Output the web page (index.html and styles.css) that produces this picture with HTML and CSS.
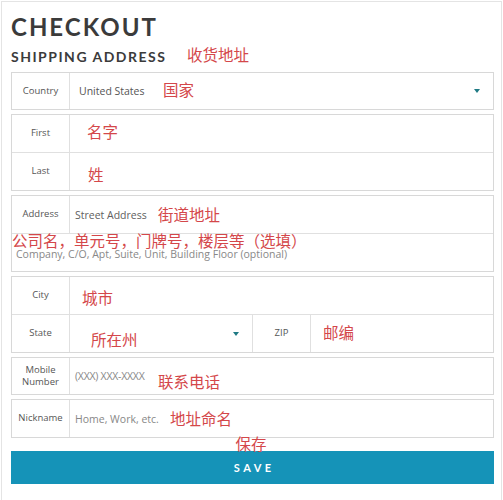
FILE: index.html
```html
<!DOCTYPE html>
<html>
<head>
<meta charset="utf-8">
<link rel="stylesheet" href="styles.css">
</head>
<body>
<div class="page">
  <h1 class="title">CHECKOUT</h1>
  <div class="subtitle-row">
    <h2 class="subtitle">SHIPPING ADDRESS</h2>
    <span class="note note-shipping">收货地址</span>
  </div>

  <div class="group">
    <div class="row row-short">
      <div class="label">Country</div>
      <div class="value value-select">United States<span class="arrow"></span></div>
      <span class="note note-country">国家</span>
    </div>
  </div>

  <div class="group">
    <div class="row">
      <div class="label">First</div>
      <div class="value"></div>
      <span class="note note-first">名字</span>
    </div>
    <div class="row">
      <div class="label">Last</div>
      <div class="value"></div>
      <span class="note note-last">姓</span>
    </div>
  </div>

  <div class="group">
    <div class="row">
      <div class="label">Address</div>
      <div class="value">Street Address</div>
      <span class="note note-street">街道地址</span>
    </div>
    <div class="row row-full">
      <div class="value value-full placeholder">Company, C/O, Apt, Suite, Unit, Building Floor (optional)</div>
      <span class="note note-company">公司名，单元号，门牌号，楼层等（选填）</span>
    </div>
  </div>

  <div class="group">
    <div class="row">
      <div class="label">City</div>
      <div class="value"></div>
      <span class="note note-city">城市</span>
    </div>
    <div class="row row-state">
      <div class="label">State</div>
      <div class="value value-state"><span class="arrow"></span></div>
      <div class="label">ZIP</div>
      <div class="value"></div>
      <span class="note note-state">所在州</span>
      <span class="note note-zip">邮编</span>
    </div>
  </div>

  <div class="group">
    <div class="row row-short">
      <div class="label label-two">Mobile<br>Number</div>
      <div class="value placeholder phone">(XXX) XXX-XXXX</div>
      <span class="note note-mobile">联系电话</span>
    </div>
  </div>

  <div class="group">
    <div class="row">
      <div class="label">Nickname</div>
      <div class="value placeholder">Home, Work, etc.</div>
      <span class="note note-nick">地址命名</span>
    </div>
  </div>

  <button class="save">SAVE<span class="note note-save">保存</span></button>
</div>
</body>
</html>
```

FILE: styles.css
```css
* { box-sizing: border-box; }

html, body {
  margin: 0;
  padding: 0;
  background: #ffffff;
}

body {
  font-family: "Open Sans", "Noto Sans", sans-serif;
  color: #555555;
}

.page {
  margin: 1px 0 0 1px;
  width: 501px;
  height: 499px;
  border: 1px solid #e4e4e4;
  border-bottom: 0;
  padding: 13px 7px 0 9px;
}

.title {
  margin: 0;
  font-family: "Lato", sans-serif;
  font-weight: 700;
  font-size: 24px;
  line-height: 24px;
  letter-spacing: 2px;
  color: #3b3b3b;
}

.subtitle-row {
  position: relative;
  margin-top: 11px;
  margin-bottom: 8px;
}

.subtitle {
  margin: 0;
  font-family: "Lato", sans-serif;
  font-weight: 700;
  font-size: 14px;
  line-height: 14px;
  letter-spacing: 1.5px;
  color: #3b3b3b;
}

.group {
  border: 1px solid #d8d8d8;
  margin-bottom: 4px;
}

.row {
  position: relative;
  display: grid;
  grid-template-columns: 58px 1fr;
  height: 37px;
}

.row + .row {
  border-top: 1px solid #e0e0e0;
  height: 38px;
}

.row-short { height: 36px; }

.row-state {
  grid-template-columns: 58px 183px 58px 1fr;
}

.row-full {
  grid-template-columns: 1fr;
}

.label {
  display: flex;
  align-items: center;
  justify-content: center;
  text-align: center;
  border-right: 1px solid #e0e0e0;
  font-size: 9.5px;
  line-height: 12.5px;
  color: #555555;
}

.value {
  position: relative;
  display: flex;
  align-items: center;
  padding-left: 5px;
  font-size: 10.5px;
  color: #606060;
}

.value-select {
  padding-left: 9px;
  color: #555555;
}

.value-state {
  border-right: 1px solid #e0e0e0;
}

.value-full {
  padding-left: 4px;
  padding-top: 4px;
  line-height: 11px;
}

.placeholder {
  color: #888888;
}

.phone {
  letter-spacing: -0.25px;
}

.arrow {
  position: absolute;
  right: 13px;
  top: 50%;
  margin-top: -2px;
  width: 0;
  height: 0;
  border-left: 3px solid transparent;
  border-right: 3px solid transparent;
  border-top: 4px solid #1f7a84;
}

.note {
  position: absolute;
  font-family: "Noto Sans CJK SC", sans-serif;
  font-size: 15.5px;
  line-height: 15px;
  color: #d4474a;
  white-space: nowrap;
  letter-spacing: 0;
  font-weight: 400;
}

.note-shipping { left: 176px; top: -3px; }
.note-country { left: 151px; top: 9px; }
.note-first { left: 75px; top: 9px; }
.note-last { left: 76px; top: 14px; }
.note-street { left: 146px; top: 11px; }
.note-company { left: 0; top: 0; line-height: 13px; }
.note-city { left: 70px; top: 13px; }
.note-state { left: 79px; top: 17px; }
.note-zip { left: 311px; top: 10px; }
.note-mobile { left: 146px; top: 16px; }
.note-nick { left: 158px; top: 11px; }
.note-save { left: 221px; top: -15px; }

.save {
  position: relative;
  display: block;
  width: 100%;
  height: 33px;
  margin-top: 13px;
  border: 0;
  padding: 0;
  background: #1593b8;
  color: #ffffff;
  font-family: "Lato", sans-serif;
  font-weight: 700;
  font-size: 11px;
  letter-spacing: 3.5px;
  text-indent: 3.5px;
}
```
